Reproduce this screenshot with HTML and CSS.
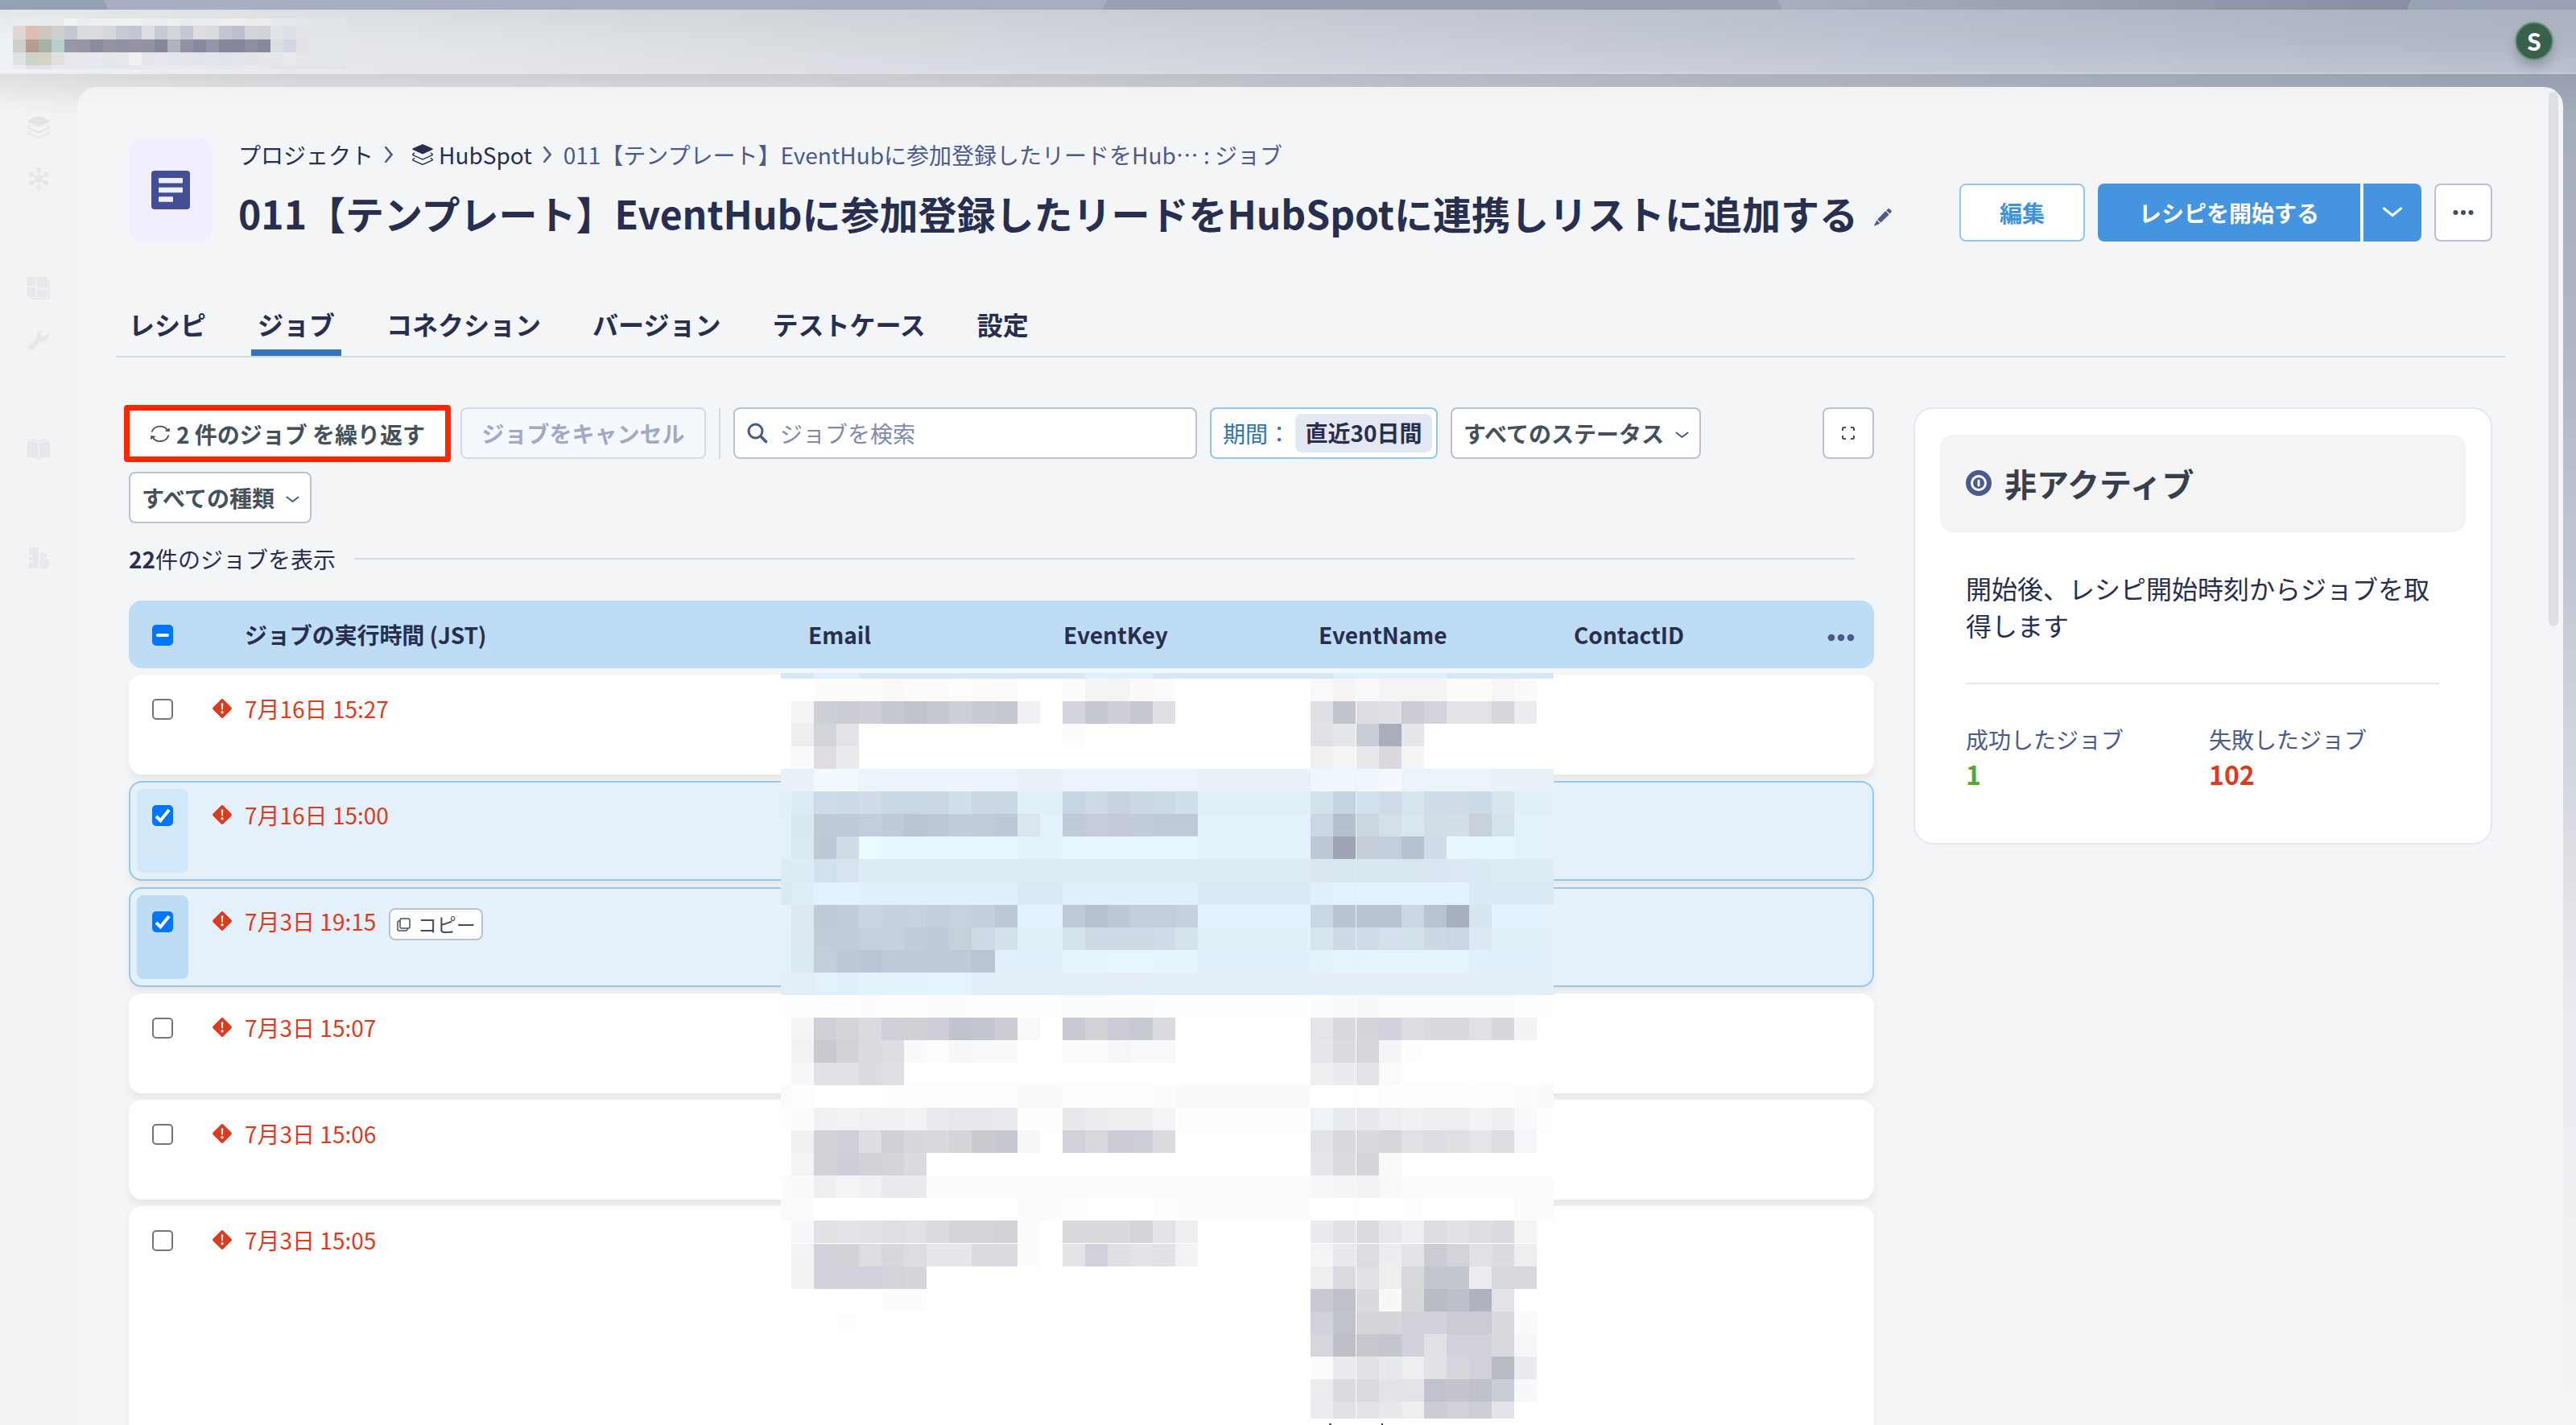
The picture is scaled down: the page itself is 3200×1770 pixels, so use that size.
FILE: index.html
```html
<!DOCTYPE html>
<html lang="ja">
<head>
    <meta charset="utf-8" />
    <meta name="viewport" content="width=device-width, initial-scale=1" />
    <title>011【テンプレート】EventHubに参加登録したリードをHubSpotに連携しリストに追加する : ジョブ</title>
    <link rel="stylesheet" href="styles.css">
</head>
<body>
    <!-- Shared icons -->
    <svg class="sprite" aria-hidden="true">
        <symbol id="icon-layers" viewBox="0 0 28 28">
            <path d="M14 0 27 5.6Q28.6 6.5 27 7.6L14 13.5 1 7.6Q-.6 6.5 1 5.600Z" fill="currentColor"/>
            <path d="M3.400 11.800 1.200 13.200Q.2 14 1.200 14.800L14 20.500 26.800 14.800Q27.800 14 26.800 13.200L24.600 11.800M3.400 18.800 1.200 20.200Q.2 21 1.200 21.800L14 27.400 26.800 21.800Q27.800 21 26.800 20.200L24.600 18.800" fill="none" stroke="currentColor" stroke-width="1.500"/>
        </symbol>
        <symbol id="icon-right" viewBox="0 0 10 20">
            <path d="M1.200 1 8.500 10 1.200 19" fill="none" stroke="currentColor" stroke-width="2.600" stroke-linecap="round"/>
        </symbol>
        <symbol id="icon-down" viewBox="0 0 16 9">
            <path d="M1 1.500 8 7 15 1.500" fill="none" stroke="currentColor" stroke-width="2" stroke-linecap="round"/>
        </symbol>
        <symbol id="icon-failed" viewBox="0 0 24 24">
            <path d="M10.300.9Q12-.8 13.700.9L23.200 10.400Q24.700 12 23.200 13.600L13.700 23.100Q12 24.800 10.300 23.100L.8 13.600Q-.7 12 .8 10.400Z" fill="currentColor"/>
            <path d="M10.700 5.500h2.600l-.5 8h-1.600z" fill="#fff"/>
            <circle cx="12" cy="16.700" r="1.700" fill="#fff"/>
        </symbol>
        <symbol id="icon-check" viewBox="0 0 26 26">
            <path d="M5 14 10.300 19.300 21 6" fill="none" stroke="#fff" stroke-width="4"/>
        </symbol>
    </svg>

    <svg class="browser-tabs" viewBox="0 0 3200 12">
        <defs>
            <linearGradient id="tab-fade" x1="0" x2="1">
                <stop offset="0" stop-color="#a5afbf"/>
                <stop offset="1" stop-color="#8690a2"/>
            </linearGradient>
        </defs>
        <rect width="3200" height="12" fill="#a5afbf"/>
        <path d="M0 0H129L134 12H0Z" fill="#95a0b1"/>
        <path d="M1375 0H2208L2214 12H1369Z" fill="#97a1b3"/>
        <path d="M2208 0H2995L2990 12H2214Z" fill="url(#tab-fade)"/>
        <path d="M2995 0H3200V12H2990Z" fill="#98a2b4"/>
    </svg>

    <header class="topbar">
        <svg class="topbar-mosaic" id="brand-mosaic" width="430" height="70"></svg>
        <div class="avatar">S</div>
    </header>

    <div class="layout">
        <nav class="sidebar">
            <svg class="nav-icon nav-layers"><use href="#icon-layers"/></svg>
            <svg class="nav-icon nav-hub" viewBox="0 0 28 28">
                <g fill="currentColor" stroke="currentColor" stroke-width="2">
                    <circle cx="14" cy="14" r="4"/>
                    <path d="M14 3V25M4.500 8.500 23.500 19.500M4.500 19.500 23.500 8.500"/>
                    <circle cx="14" cy="3" r="2"/><circle cx="14" cy="25" r="2"/>
                    <circle cx="4.800" cy="8.800" r="2.300"/><circle cx="23.200" cy="19.200" r="2.300"/>
                    <circle cx="4.800" cy="19.200" r="2.300"/><circle cx="23.200" cy="8.800" r="2.300"/>
                </g>
            </svg>
            <hr>
            <svg class="nav-icon nav-board" viewBox="0 0 28 28">
                <g fill="currentColor">
                    <path d="M2 0h8.500v11H0V2Q0 0 2 0ZM12 0h11q2 0 2 2v12H12ZM0 12.500h10.500V25H2q-2 0-2-2ZM12 15.500h13V23q0 2-2 2H12Z"/>
                    <path d="M26 4h2v22q0 2-2 2H6q-1.500 0-2-2h22Z"/>
                </g>
            </svg>
            <svg class="nav-icon nav-wrench" viewBox="0 0 28 28">
                <path d="M20.500 2A8 8 0 0 0 12.200 12L2.500 20.500A3.400 3.400 0 1 0 7.500 25.500L16 16A8 8 0 0 0 26 5.500L21 10 17.500 9 16.700 6Z" fill="currentColor"/>
            </svg>
            <hr>
            <svg class="nav-icon nav-book" viewBox="0 0 28 28">
                <g fill="currentColor">
                    <path d="M0 5Q8 3 13.400 7.500V27Q8 22.500 0 24ZM28 5Q20 3 14.600 7.500V27Q20 22.500 28 24Z"/>
                    <path d="M1.500 2Q9 0 14 4.700 19 0 26.500 2V3.500Q19 2 14 6.500 9 2 1.500 3.500Z"/>
                </g>
            </svg>
            <hr>
            <svg class="nav-icon nav-building" viewBox="0 0 28 28">
                <path d="M2 2Q2 0 4 0H12Q14 0 14 2V26H0V25H2V19H7V16H2V12H7V9H2ZM16 6 24 8V12L16 14ZM21 13 27 15.500V20Q27 25.500 21 28 15 25.500 15 20V15.500Z" fill="currentColor"/>
            </svg>
        </nav>

        <main class="panel">
            <div class="page-head">
                <div class="recipe-icon">
                    <svg width="48" height="48" viewBox="0 0 48 48">
                        <rect width="48" height="48" rx="4" fill="#444e95"/>
                        <g fill="#f0eefe">
                            <rect x="9" y="9" width="30" height="6.500" rx="1"/>
                            <rect x="9" y="20.700" width="30" height="6.500" rx="1"/>
                            <rect x="9" y="32.300" width="18" height="6.500" rx="1"/>
                        </g>
                    </svg>
                </div>
                <div class="heading">
                    <div class="breadcrumbs">
                        <span>プロジェクト</span>
                        <svg class="crumb-arrow"><use href="#icon-right"/></svg>
                        <svg class="crumb-layers"><use href="#icon-layers"/></svg>
                        <span>HubSpot</span>
                        <svg class="crumb-arrow"><use href="#icon-right"/></svg>
                        <span class="crumb-current">011【テンプレート】EventHubに参加登録したリードをHub… : ジョブ</span>
                    </div>
                    <div class="title-row">
                        <h1>011【テンプレート】EventHubに参加登録したリードをHubSpotに連携しリストに追加する</h1>
                        <svg class="pencil" viewBox="0 0 22 22">
                            <path d="M15.300 2.200 17.200.5Q18.400-.4 19.600.7L21.200 2.300Q22.300 3.500 21.300 4.600L19.600 6.500ZM14.400 3.100 18.700 7.400 8.500 17.600 4.200 13.400ZM3.300 14.500 7.500 18.600 1 21.600Q0 21.800.3 20.800Z" fill="#4a5a8c"/>
                        </svg>
                    </div>
                </div>
                <div class="actions">
                    <button class="button edit">編集</button>
                    <div class="split">
                        <button class="start">レシピを開始する</button>
                        <button class="start-more"><svg width="24" height="14" viewBox="0 0 24 14"><path d="M1.500 2 12 10.500 22.500 2" fill="none" stroke="#fff" stroke-width="3" stroke-linecap="round"/></svg></button>
                    </div>
                    <button class="button more"><svg width="26" height="8" viewBox="0 0 26 8"><g fill="#44505c"><circle cx="3.500" cy="4" r="3"/><circle cx="13" cy="4" r="3"/><circle cx="22.500" cy="4" r="3"/></g></svg></button>
                </div>
            </div>

            <div class="tabs">
                <span>レシピ</span>
                <span class="active">ジョブ</span>
                <span>コネクション</span>
                <span>バージョン</span>
                <span>テストケース</span>
                <span>設定</span>
            </div>

            <div class="content">
                <section class="jobs">
                    <div class="toolbar">
                        <button class="repeat">
                            <svg width="24" height="24" viewBox="0 0 24 24">
                                <path d="M1.500 9.500A11 10.500 0 0 1 21.500 8M22.500 13.500A11 10.500 0 0 1 2.500 16" fill="none" stroke="#44505c" stroke-width="1.800"/>
                                <path d="M23.800 4.500V9.200L17.500 8.500ZM.2 19V14L7 15Z" fill="#44505c"/>
                            </svg>
                            <span>2 件のジョブ を繰り返す</span>
                        </button>
                        <button class="cancel">ジョブをキャンセル</button>
                        <div class="separator"></div>
                        <div class="search">
                            <svg width="26" height="26" viewBox="0 0 26 26"><circle cx="10.500" cy="10.500" r="8.500" fill="none" stroke="#4a5a8c" stroke-width="3"/><path d="M17 17 23.500 23.500" stroke="#4a5a8c" stroke-width="3.600" stroke-linecap="round"/></svg>
                            <span>ジョブを検索</span>
                        </div>
                        <div class="period">期間：<b>直近30日間</b></div>
                        <button class="filter status">すべてのステータス<svg class="down"><use href="#icon-down"/></svg></button>
                        <button class="expand"><svg width="16" height="16" viewBox="0 0 16 16"><path d="M1 5V2.500Q1 1 2.500 1H5M11 1h2.500Q15 1 15 2.500V5M15 11v2.500q0 1.500-1.500 1.500H11M5 15H2.500Q1 15 1 13.500V11" fill="none" stroke="#44505c" stroke-width="2"/></svg></button>
                    </div>
                    <button class="filter kinds">すべての種類<svg class="down"><use href="#icon-down"/></svg></button>
                    <div class="count"><span><b>22</b>件のジョブを表示</span></div>

                    <div class="table">
                        <div class="table-head">
                            <div class="select"><i class="checkbox checked"><i class="dash"></i></i></div>
                            <div class="time">ジョブの実行時間 (JST)</div>
                            <div>Email</div>
                            <div>EventKey</div>
                            <div>EventName</div>
                            <div>ContactID</div>
                            <svg class="columns" viewBox="0 0 34 12"><g fill="#4a5a8c"><circle cx="5" cy="6" r="4.300"/><circle cx="17" cy="6" r="4.300"/><circle cx="29" cy="6" r="4.300"/></g></svg>
                        </div>
                        <div class="row">
                            <div class="select"><i class="checkbox"></i></div>
                            <div class="job"><svg class="failed"><use href="#icon-failed"/></svg>7月16日 15:27</div>
                        </div>
                        <div class="row selected">
                            <div class="select"><i class="checkbox checked"><svg><use href="#icon-check"/></svg></i></div>
                            <div class="job"><svg class="failed"><use href="#icon-failed"/></svg>7月16日 15:00</div>
                        </div>
                        <div class="row selected hovered">
                            <div class="select"><i class="checkbox checked"><svg><use href="#icon-check"/></svg></i></div>
                            <div class="job"><svg class="failed"><use href="#icon-failed"/></svg>7月3日 19:15
                                <button class="copy"><svg width="17" height="17" viewBox="0 0 17 17"><g fill="none" stroke="#44505c" stroke-width="1.500"><rect x="4" y="1" width="12" height="12" rx="1.500"/><path d="M4 4H2.500Q1 4 1 5.500V14.500Q1 16 2.500 16H11.500Q13 16 13 14.500V13"/></g></svg>コピー</button>
                            </div>
                        </div>
                        <div class="row">
                            <div class="select"><i class="checkbox"></i></div>
                            <div class="job"><svg class="failed"><use href="#icon-failed"/></svg>7月3日 15:07</div>
                        </div>
                        <div class="row">
                            <div class="select"><i class="checkbox"></i></div>
                            <div class="job"><svg class="failed"><use href="#icon-failed"/></svg>7月3日 15:06</div>
                        </div>
                        <div class="row tall">
                            <div class="select"><i class="checkbox"></i></div>
                            <div class="job"><svg class="failed"><use href="#icon-failed"/></svg>7月3日 15:05</div>
                        </div>
                        <svg class="table-mosaic" id="table-mosaic" width="960" height="934"></svg>
                    </div>
                </section>

                <aside class="summary">
                    <div class="state">
                        <svg width="32" height="32" viewBox="0 0 32 32"><circle cx="16" cy="16" r="16" fill="#4a5a8c"/><circle cx="16" cy="16" r="8.500" fill="none" stroke="#fff" stroke-width="3"/><rect x="14.500" y="11.500" width="3" height="9" rx="1.500" fill="#fff"/></svg>
                        <span>非アクティブ</span>
                    </div>
                    <p>開始後、レシピ開始時刻からジョブを取得します</p>
                    <div class="stats">
                        <div>成功したジョブ<b class="ok">1</b></div>
                        <div>失敗したジョブ<b class="ng">102</b></div>
                    </div>
                </aside>
            </div>
            <div class="scrollbar"></div>
        </main>
    </div>
    <script src="mosaic.js"></script>
</body>
</html>
```

FILE: styles.css
```css
* {
    margin: 0;
    padding: 0;
    box-sizing: border-box;
}

body {
    width: 3200px;
    height: 1770px;
    overflow: hidden;
    font-family: "Noto Sans CJK JP", "Noto Sans", sans-serif;
    font-size: 28px;
    line-height: 40px;
    color: #272e4f;
    background: #f3f3f3;
}

button {
    font: inherit;
    background: #fff;
    border: 2px solid #bbc1d0;
    border-radius: 8px;
    color: #44505c;
    display: flex;
    align-items: center;
    justify-content: center;
}

svg {
    display: block;
    flex-shrink: 0;
}

.sprite {
    position: absolute;
    width: 0;
    height: 0;
}

.browser-tabs {
    width: 3200px;
    height: 12px;
}

/* Top bar */
.topbar {
    position: relative;
    height: 80px;
    padding-right: 28px;
    display: flex;
    align-items: center;
    justify-content: flex-end;
    background:
        linear-gradient(180deg, rgba(130, 145, 155, 0.1), rgba(255, 255, 255, 0) 50%, rgba(245, 242, 255, 0.18)),
        linear-gradient(90deg, #eef2f3 0%, #e3e6e9 14%, #d4d8dd 37%, #c8ccd7 57%, #b8bfcc 80%, #aeb6c3 100%);
    border-bottom: 2px solid rgba(255, 255, 255, 0.3);
}

.topbar-mosaic {
    position: absolute;
    left: 0;
    top: 11px;
}

.avatar {
    width: 48px;
    height: 48px;
    border-radius: 50%;
    border: 2px solid #6d9380;
    background: #38614b;
    color: #fff;
    font-family: Lato, sans-serif;
    font-weight: 900;
    font-size: 31px;
    line-height: 44px;
    text-align: center;
    box-shadow: 0 8px 12px rgba(70, 80, 100, 0.3);
}

.layout {
    height: 1678px;
    display: flex;
    padding: 16px 16px 0 0;
    background:
        linear-gradient(180deg, rgba(90, 95, 105, 0.14), rgba(90, 95, 105, 0) 50px) 0 0 / 100% 50px no-repeat,
        linear-gradient(180deg, #a1aabb 0, #b3bbc9 420px, #ced1d9 780px, #e9ebee 1150px, #f3f4f5 1678px) right / 40px 100% no-repeat,
        linear-gradient(90deg, #f4f4f4 0, #e6e7e8 300px, #dadcdf 1100px, #c7cad2 1700px, #b4bbc7 2400px, #a1aabb 3160px) 0 0 / 100% 50px no-repeat,
        #f3f3f3;
}

/* Sidebar */
.sidebar {
    width: 96px;
    height: 1662px;
    padding-top: 36px;
    display: flex;
    flex-direction: column;
    align-items: center;
    color: #e6e8ec;
    background: linear-gradient(180deg, rgba(243, 243, 243, 0) 0, #f3f3f3 100px);
}

.sidebar hr {
    width: 56px;
    border: 0;
    border-top: 1px solid #eff0f0;
}

.nav-icon {
    width: 28px;
    height: 28px;
}

.nav-layers {
    color: #e2e3e4;
}

.nav-hub {
    margin: 36px 0 61px;
}

.nav-board {
    margin-top: 46px;
}

.nav-wrench {
    margin: 36px 0 61px;
}

.nav-book {
    margin: 46px 0 61px;
}

.nav-building {
    margin-top: 46px;
}

/* Main panel */
.panel {
    position: relative;
    width: 3088px;
    height: 1662px;
    padding: 64px 72px 0 48px;
    border-radius: 24px 24px 0 0;
    background: linear-gradient(180deg, #f0f1f3 0, #f4f5f7 24px);
}

.scrollbar {
    position: absolute;
    top: 6px;
    right: 6px;
    width: 12px;
    height: 664px;
    border-radius: 6px;
    background: #dddfe4;
}

.page-head {
    display: flex;
    height: 128px;
    padding-left: 16px;
    margin-right: 16px;
}

.recipe-icon {
    width: 104px;
    height: 128px;
    border-radius: 16px;
    background: #f0eefe;
    display: flex;
    align-items: center;
    justify-content: center;
}

.heading {
    margin-left: 32px;
    flex: 1;
    white-space: nowrap;
}

.breadcrumbs {
    display: flex;
    align-items: center;
    height: 40px;
}

.crumb-arrow {
    width: 10px;
    height: 20px;
    margin: 0 15px 0 14px;
    color: #4a5a8c;
}

.crumb-layers {
    width: 26px;
    height: 26px;
    margin: 0 7px 0 9px;
}

.crumb-current {
    color: #4a5a8c;
}

.title-row {
    display: flex;
    align-items: center;
    height: 72px;
    margin-top: 16px;
}

h1 {
    font-size: 48px;
    line-height: 72px;
    font-weight: 700;
}

.pencil {
    width: 22px;
    height: 22px;
    margin: 12px 0 0 20px;
}

.actions {
    display: flex;
    gap: 16px;
    height: 72px;
    margin-top: 56px;
    font-weight: 700;
}

.edit {
    width: 156px;
    border-color: #92c7eb;
    color: #3e92dc;
}

.split {
    display: flex;
    gap: 4px;
}

.start,
.start-more {
    border: 0;
    background: #4494df;
    color: #fff;
}

.start {
    width: 326px;
    border-radius: 8px 0 0 8px;
}

.start-more {
    width: 72px;
    border-radius: 0 8px 8px 0;
}

.more {
    width: 72px;
}

.tabs {
    display: flex;
    gap: 48px;
    height: 144px;
    padding: 78px 0 0 8px;
    border-bottom: 2px solid #d1d9e6;
    font-size: 32px;
    line-height: 48px;
    font-weight: 700;
}

.tabs span {
    height: 64px;
    padding: 0 8px;
}

.tabs .active {
    background: linear-gradient(#3673bd, #3673bd) bottom / 100% 8px no-repeat;
}

.content {
    display: flex;
    justify-content: space-between;
    padding: 62px 16px 0;
}

/* Toolbar */
.jobs {
    width: 2168px;
}

.toolbar {
    display: flex;
    height: 64px;
    white-space: nowrap;
}

/* The highlight frame spills over the button's own box */
.repeat {
    width: 406px;
    height: 71px;
    margin: -3px 12px 0 -6px;
    padding-left: 1px;
    border: 7px solid #ff2600;
    border-radius: 4px;
    gap: 8px;
    font-weight: 700;
}

.cancel {
    width: 305px;
    margin-right: 1px;
    border-color: #d2dae6;
    background: #f5f9fd;
    color: #a1a9c6;
    font-weight: 700;
}

.separator {
    width: 2px;
    margin: 0 16px 0 15px;
    background: #d2dae6;
}

.search {
    width: 576px;
    margin-right: 16px;
    padding: 0 15px;
    display: flex;
    align-items: center;
    gap: 15px;
    border: 2px solid #bbc1d0;
    border-radius: 8px;
    background: #fff;
    color: #8089ae;
}

.period {
    width: 283px;
    margin-right: 16px;
    padding-left: 14px;
    display: flex;
    align-items: center;
    border: 2px solid #92c7eb;
    border-radius: 8px;
    background: #fff;
    color: #2f72bb;
}

.period b {
    height: 48px;
    width: 170px;
    margin-left: 6px;
    border-radius: 8px;
    background: #e4e8f2;
    color: #272e4f;
    line-height: 47px;
    text-align: center;
}

.filter {
    font-weight: 700;
    justify-content: space-between;
    padding: 0 13px 0 14px;
}

.status {
    width: 311px;
}

.kinds {
    width: 227px;
    height: 64px;
    margin-top: 16px;
}

.down {
    width: 17px;
    height: 9px;
    margin-top: 4px;
    color: #4a5a8c;
}

.expand {
    width: 64px;
    margin-left: auto;
}

.count {
    display: flex;
    align-items: center;
    height: 40px;
    margin: 24px 24px 0 0;
}

.count::after {
    content: "";
    flex: 1;
    height: 2px;
    margin-left: 23px;
    background: #d1d9e6;
}

/* Jobs table */
.table {
    position: relative;
    margin-top: 32px;
}

.table-head {
    position: relative;
    display: grid;
    grid-template-columns: 64px 770px 317px 317px 317px 1fr;
    height: 84px;
    padding: 0 10px;
    margin-bottom: 8px;
    border-radius: 16px;
    background: #bedcf4;
    font-weight: 700;
    line-height: 84px;
}

.table-head .time {
    padding-left: 70px;
    letter-spacing: -0.1px;
}

.columns {
    position: absolute;
    right: 24px;
    top: 40px;
    width: 34px;
    height: 12px;
}

.select {
    display: flex;
    justify-content: center;
    padding-top: 20px;
    border-radius: 8px;
}

.table-head .select {
    padding-top: 30px;
}

.row {
    display: flex;
    height: 124px;
    padding: 8px;
    margin-bottom: 8px;
    border: 2px solid #fff;
    border-radius: 16px;
    background: #fff;
    box-shadow: 0 6px 10px rgba(60, 60, 60, 0.08);
}

.row .select {
    width: 64px;
}

.selected {
    border-color: #94c8ee;
    background: #e4f1fb;
}

.selected .select {
    background: #d2e8f9;
}

.hovered .select {
    background: #bedcf4;
}

.tall {
    height: 300px;
}

.job {
    display: flex;
    height: 40px;
    margin-top: 12px;
    padding-left: 30px;
    color: #de3a1b;
    white-space: nowrap;
}

.failed {
    width: 24px;
    height: 24px;
    margin: 8px 16px 0 0;
}

.checkbox {
    width: 26px;
    height: 26px;
    border: 2px solid #767676;
    border-radius: 5px;
    background: #fff;
}

.checked {
    display: flex;
    align-items: center;
    justify-content: center;
    border: 0;
    background: #0075ff;
}

.checked svg {
    width: 26px;
    height: 26px;
}

.dash {
    width: 16px;
    height: 4px;
    border-radius: 2px;
    background: #fff;
}

.copy {
    width: 117px;
    height: 40px;
    margin: 4px 0 0 16px;
    gap: 9px;
    font-size: 24px;
    line-height: 34px;
}

.table-mosaic {
    position: absolute;
    left: 810px;
    top: 90px;
}

/* Recipe summary */
.summary {
    width: 719px;
    height: 543px;
    padding: 32px 31px;
    border: 2px solid #e4e9f1;
    border-radius: 24px;
    background: #fff;
}

.state {
    display: flex;
    align-items: center;
    gap: 16px;
    height: 121px;
    padding: 0 0 2px 32px;
    border-radius: 16px;
    background: #f4f4f4;
    color: #36404c;
    font-size: 40px;
    font-weight: 700;
}

.summary p {
    margin: 46px 32px 0;
    padding-bottom: 49px;
    width: 588px;
    border-bottom: 2px solid #e4e9f1;
    font-size: 32px;
    line-height: 46px;
}

.stats {
    display: grid;
    grid-template-columns: 302px 1fr;
    margin: 48px 32px 0;
    color: #4a5a8c;
}

.stats b {
    display: block;
    font-size: 32px;
    line-height: 46px;
}

.ok {
    color: #5aa52a;
}

.ng {
    color: #de3a1b;
}
```

FILE: mosaic.js
```js
// Pixelated cover over private data. Each row: [base colour, [first column, colour, colour...], ...]
const SVG_NS = 'http://www.w3.org/2000/svg';

function addRect(svg, x, y, w, h, fill) {
    const rect = document.createElementNS(SVG_NS, 'rect');
    const left = Math.round(x);
    const top = Math.round(y);
    rect.setAttribute('x', left);
    rect.setAttribute('y', top);
    rect.setAttribute('width', Math.round(x + w) - left);
    rect.setAttribute('height', Math.round(y + h) - top);
    rect.setAttribute('fill', '#' + fill);
    svg.appendChild(rect);
}

const tableRows = [
    ['ffffff', [1, 'fdfcfa', 'fdfcfa', 'fdfcfa', 'faf9f7', 'fcfafb', 'fcfafb', 'fefdfb', 'fcfbf9', 'fcfafb'], [12, 'fdfcfc', 'f5f5f5', 'f5f4f4', 'fcf9fa', 'fcfafb'], [23, 'fbf8f9', 'f6f4f4', 'fbf8fa', 'f5f3f4', 'f5f3f4', 'f5f3f4', 'fcfbf9', 'fcfbf9', 'f7f5f6', 'fafafa']],
    ['ffffff', [0, 'f3f4f6', 'cdcfd7', 'cbcdd6', 'ceced8', 'c7c9d2', 'c1c3cd', 'c5c7d1', 'ccced8', 'c9cbd4', 'c7c9d1', 'f0f0f5'], [12, 'd3d5de', 'c7c9d2', 'cfcdd8', 'c6c8d1', 'dfdfe5'], [23, 'dfe0e5', 'c2c5cd', 'dddde3', 'dfe0e5', 'cacbd5', 'd4d3dd', 'e2e3e7', 'e2e3e7', 'd6d7dc', 'ecedf1']],
    ['ffffff', [0, 'eeeef1', 'd3d4d9', 'e4e4e8'], [12, 'fcfcfc'], [23, 'e0e0e5', 'e5e7eb', 'cacdd6', 'acadba', 'e5e6ea']],
    ['ffffff', [0, 'f9f9f9', 'dfdde3', 'ebebed'], [23, 'f0f0f1', 'f4f4f4', 'e9e9eb', 'dad9df', 'f4f4f4']],
    ['e8f0f8', [1, 'f1f9ff', 'f1f9ff', 'ebf4fb', 'ecf5fd', 'ecf5fd', 'ecf5fd', 'ecf5fd', 'ecf5fd', 'ecf5fd'], [12, 'ebf4fc', 'ebf4fc', 'ebf4fc', 'ebf4fc', 'ebf4fc', 'ebf4fc'], [23, 'eef6fe', 'eef6fe', 'eef6fe', 'f3f9ff', 'ebf4fb', 'ebf4fb', 'ebf4fb', 'ebf4fb']],
    ['e0eff8', [0, 'ddebf4', 'cfdce7', 'ccd9e6', 'd1dce8', 'c9d7e4', 'c9d7e4', 'ccd9e5', 'd1dfea', 'cbd8e4', 'cad8e4'], [12, 'c7d6e4', 'cedae6', 'c8d3e0', 'ccd9e5', 'cbdae4', 'd1dfea'], [23, 'd3e1eb', 'c5d3e1', 'd3e1ec', 'cfdbe7', 'd6e4eb', 'd0dce8', 'd0dde6', 'cbdae5', 'd7e4ec']],
    ['e3f1fb', [0, 'd9e7ee', 'bfcad6', 'c0cbd8', 'c4cddb', 'c0cbd8', 'b9c4d4', 'bcc8d7', 'c2cddb', 'c1ccdb', 'bec9d5', 'd9e6ef'], [12, 'c0cbd7', 'c4cdd9', 'c4cbd8', 'c2cddb', 'bfcad7', 'bfcad6'], [23, 'cad6e2', 'b4c0cc', 'cad7df', 'd3e0e8', 'd8e6ed', 'd1dee6', 'd2dfe7', 'c8d1dc', 'd4e2e9']],
    ['e3f1fb', [0, 'dae8ef', 'bdcad5', 'd0dde5', 'ebfaff', 'e8f6ff', 'e8f6ff', 'e8f6ff', 'e8f6ff', 'e8f6ff', 'e8f6ff'], [12, 'e8f6ff', 'e8f6ff', 'e8f6ff', 'e8f6ff', 'e8f6ff', 'e8f6ff'], [23, 'bec9d5', '9ea3b6', 'c5cdd9', 'c2cedb', 'b6c2d2', 'd0dce7', 'e7f6ff', 'e7f6ff', 'e7f6ff']],
    ['ddebf5', [1, 'd2e0eb', 'd7e3ef'], [23, 'dae6f0', 'd8e6ed', 'd8e6ee', 'd8e6f0', 'd8e6ee', 'dbe6f2', 'dbe8f3', 'dbe9f3']],
    ['dceaf6', [0, 'dfedf6', 'e3f2fd', 'e3f2fd', 'e1f0fa', 'e1f0fa', 'e1f0fa', 'e1f0fa', 'e1f0fa', 'e1f0fa', 'e1f0fa'], [12, 'e1effa', 'e1effa', 'e1effa', 'e1effa', 'e1effa', 'e1effa'], [23, 'e0eff9', 'e2f1fb', 'e2f1fb', 'e2f1fb', 'e2f1fb', 'e2f1fb', 'e2f1fb']],
    ['e3f2fc', [0, 'dde9f1', 'bfcad6', 'c3ccd9', 'cbd5e1', 'c6d1de', 'c8d2de', 'c4ceda', 'c8d2de', 'c4cfdb', 'bdc9d6'], [12, 'bfcad6', 'b5c0d0', 'bdc9d6', 'c3ceda', 'c3cedb', 'c6cfdc'], [23, 'cad7e4', 'b8c4d3', 'b8c4d3', 'b8c4d3', 'cad6e2', 'b7c3d0', 'a6aec0', 'd7e5ee']],
    ['e1f0f9', [0, 'dde9f1', 'c2cdd9', 'c3cdd9', 'c5d0dc', 'c6d1dd', 'c2cdd9', 'c1cbd7', 'c5d0db', 'cdd9e4', 'd3e1e9'], [12, 'd5e3eb', 'cddae6', 'cddae6', 'cddae6', 'd0dce9', 'd4e2e9'], [23, 'd6e4ec', 'cddae6', 'd0dbe7', 'd4e0ec', 'd2e0e8', 'ccd8e4', 'cad6e3', 'ddeaf3']],
    ['e1f0fa', [0, 'dae8ef', 'c3cedb', 'bdc9d7', 'bac6d5', 'bfcad9', 'bfcad9', 'bfcad9', 'bfcad9', 'bac5d3'], [12, 'e5f4fd', 'e5f4fd', 'e5f6fe', 'e5f6fe', 'e5f4fd', 'e5f4fd'], [23, 'e3f3fc', 'e4f4fd', 'e4f4fd', 'e4f4fd', 'e4f4fd', 'e5f5fd', 'e5f5fd']],
    ['e3eef8', [1, 'e3f1fa', 'e2f0fa', 'e4f2fb', 'e4f2fb', 'e4f2fb', 'e5f3fc', 'e5f3fc']],
    ['fefefe', [3, 'fcfcfc'], [6, 'fcfcfc', 'fcfcfc'], [12, 'fbfbfb', 'fbfbfb', 'fcfcfc', 'fcfcfc'], [23, 'fcfcfc', 'fafafa', 'f8f8f8', 'fbfbfb', 'fbfbfb', 'fbfbfb', 'fbfbfb', 'fbfbfb', 'fbfbfb', 'fdfdfd']],
    ['ffffff', [0, 'f3f4f6', 'cfcfd8', 'd4d5da', 'dadbe0', 'cfcfd8', 'd0d0d6', 'cecdd8', 'c0c2cd', 'c4c7d0', 'cdccd5', 'f9f9f9'], [12, 'c8cbd3', 'd2d3d8', 'cbcbd5', 'c8cad3', 'dadbe0'], [23, 'e4e5e9', 'd8d9dd', 'd5d6db', 'd2d2dc', 'dddde2', 'd9dade', 'd9dade', 'e0e1e5', 'd6d8dc', 'f2f3f5']],
    ['ffffff', [0, 'f2f2f5', 'c9c9d2', 'd2d3d8', 'dbdae0', 'dedde3', 'fafafa', 'fdfdfd', 'f8f8f8', 'f9f9f9', 'fafafa'], [12, 'fcfcfc', 'fcfcfc', 'f6f6f6', 'f9f9f9', 'f9f9f9'], [23, 'e6e6eb', 'dbdce1', 'd6d7dc', 'f4f5f7', 'fefefe']],
    ['ffffff', [0, 'f8f8f8', 'e2e1e6', 'e2e1e6', 'dbdce1', 'e0dfe6'], [23, 'efeff1', 'e9ebee', 'e4e3e8', 'fbfbfb']],
    ['f9fbfa', [0, 'fcfefd', 'ffffff', 'ffffff', 'ffffff', 'fefefe', 'fdfdfd', 'fdfdfd', 'fefefc', 'fefefe', 'fdfdfd'], [12, 'fefefe', 'fefefe', 'fdfdfd', 'fdfdfd', 'fcfcfc'], [23, 'ffffff', 'ffffff', 'ffffff', 'fdfdfd', 'fdfdfd', 'fcfefd', 'fdfefd', 'fdfdfd', 'fdfdfd', 'fbfcfb']],
    ['fefefe', [0, 'fcfcfc', 'f0f1f3', 'f1f2f3', 'f0f0f2', 'eff1f3', 'f1f3f4', 'e9ebee', 'e6e8ec', 'e8e9ed', 'e9eaed'], [12, 'e8e9ec', 'ededf0', 'efeff0', 'efeff0', 'f4f5f7'], [23, 'f0f3f5', 'e9eaed', 'e7e8ec', 'edeeef', 'f0f1f3', 'eeeef0', 'eeeef0', 'f2f3f5', 'eeeef0', 'f8f9fb']],
    ['ffffff', [0, 'f1f1f4', 'd2d3d7', 'cfcfd8', 'dddde2', 'd0d0d9', 'd7d7dc', 'd9d9de', 'd5d6da', 'cacad0', 'c7c9d1', 'f8f8f8'], [12, 'd1d1da', 'd8d9de', 'cdccd6', 'cbced6', 'dbdbe0'], [23, 'e4e3e9', 'dadade', 'dadade', 'd6d7db', 'e0e0e5', 'dfdde3', 'dfdfe4', 'e4e5e9', 'dddde2', 'f4f6f9']],
    ['ffffff', [0, 'f4f4f4', 'd2d3d7', 'cecdd8', 'd2d3d7', 'd4d5d9', 'dadae0'], [23, 'e6e7eb', 'dbdce1', 'd5d6da', 'f9f9f9']],
    ['fcfcfc', [0, 'fafafa', 'efeff1', 'f2f4f6', 'f0f1f3', 'e9eaee', 'ebebed'], [23, 'f7f8f9', 'f5f5f5', 'f2f3f5', 'f9f9f9']],
    ['fafcfb', [0, 'fcfcfc', 'ffffff', 'ffffff', 'ffffff', 'ffffff', 'ffffff', 'ffffff', 'ffffff', 'ffffff', 'ffffff'], [12, 'fefefe', 'ffffff', 'ffffff', 'ffffff', 'fdfdfd', 'fcfcfc'], [23, 'ffffff', 'ffffff', 'ffffff', 'ffffff', 'fefefe', 'ffffff', 'ffffff', 'ffffff', 'ffffff']],
    ['ffffff', [0, 'f6f8fb', 'e0e1e5', 'e3e4e8', 'e1e2e6', 'dddfe3', 'e0e1e5', 'dadbe0', 'd3d4d9', 'd4d5d9', 'd2d3d8', 'fafcfb'], [12, 'd8d9dd', 'd8d9dd', 'd9dade', 'd3d4d9', 'e2e3e7', 'efeff1'], [23, 'eaeaef', 'e2e1e6', 'dbdce1', 'e7e8eb', 'eeeef0', 'dddde2', 'e2e1e7', 'dddde2', 'dcdbe1', 'f4f4f5']],
    ['ffffff', [0, 'f3f3f6', 'd2d2dc', 'd2d3d7', 'dddde2', 'd7d7dc', 'dcdde2', 'e6e7eb', 'e6e7eb', 'dbdce1', 'dbdce1', 'fbfbfb'], [12, 'e3e4e8', 'd1d1dc', 'dfdfe4', 'e3e3e8', 'e2e1e6', 'f3f3f6'], [23, 'f2f4f6', 'e8e9ec', 'dcdce1', 'ededef', 'e3e4e8', 'cbcbd3', 'd3d4d9', 'e0e1e5', 'dbdbe0', 'eeeef0']],
    ['ffffff', [0, 'f3f3f6', 'd2d2dc', 'd3d2dc', 'd1d1dc', 'd3d4d9', 'd5d6db'], [23, 'eeeeee', 'dadbe0', 'e0e1e6', 'eeeeef', 'd8d9dd', 'c4c7d0', 'c4c7d0', 'ebecef', 'd8d9dd', 'd8d9dd']],
    ['ffffff', [4, 'fcfcfc', 'fcfcfc'], [23, 'cac9d2', 'c0c0ca', 'd9dade', 'f8f8f8', 'd7d8dc', 'b9bcc5', 'bdc0ca', 'b1b2bf', 'e2e3e7']],
    ['ffffff', [2, 'fefefe'], [23, 'd1d1db', 'c0c2cc', 'd5d6da', 'd5d6da', 'd1d1db', 'd1d1db', 'cccbd5', 'cccbd5', 'd9dade', 'fafafa']],
    ['ffffff', [23, 'd6d7dc', 'bfbec9', 'c8c7d0', 'c4c7d0', 'd1d1dc', 'e2e1e6', 'd1d1db', 'd1d1db', 'd8d9dd', 'f6f6f9']],
    ['ffffff', [23, 'fbfbfb', 'e9eaed', 'e1e2e6', 'e8e9ec', 'eeeef0', 'e3e1e7', 'd6d7dc', 'd1d1dc', 'b8bac4', 'eaebee']],
    ['ffffff', [23, 'ededef', 'dadbe0', 'dadbe0', 'e3e4e8', 'e4e3e8', 'c0c2cd', 'c5c4ce', 'bec0ca', 'cacdd6', 'f6f8fa']],
    ['ffffff', [23, 'ebecf0', 'e0e1e5', 'e3e4e7', 'e9e9ec', 'eeeeef', 'cdccd6', 'd1d1dc', 'cecdd6', 'e4e3e9']]
];

const table = document.getElementById('table-mosaic');
const CELL = 28.06;

// thin strip touching the table header
addRect(table, 0, 0, 960, 7, 'd8e9f6');
addRect(table, 41, 0, 56, 7, 'dcf0fe');
addRect(table, 378, 0, 84, 7, 'dff1fd');
addRect(table, 687, 0, 140, 7, 'dcf1ff');

tableRows.forEach(([base, ...runs], i) => {
    const y = 7 + i * CELL;
    const h = i === tableRows.length - 1 ? 21 : CELL;
    addRect(table, 0, y, 960, h, base);
    runs.forEach(([start, ...colors]) => {
        colors.forEach((color, j) => addRect(table, 13 + (start + j) * CELL, y, CELL, h, color));
    });
});
// tips of the text line below the cover
addRect(table, 681, 932, 3, 2, '55596f');
addRect(table, 746, 932, 2, 2, '272e4f');

const brandRows = [
    [0, 9, ['e8eeef', 'e9eff0', 'e9ecec', 'ebebec', 'f2f4f3', 'ececee', 'eeefef', 'eeeeef', 'f0f1f1', 'f0f1f1', 'ecedee', 'ecebee', 'edeeef', 'ebebed', 'ecedee', 'ecedee', 'efefef', 'efefef', 'ececed', 'ececed', 'e7e8e9', 'e6e8ea', 'e4e6e8', 'e2e5e7', 'e2e5e7', 'e2e5e7']],
    [9, 17, ['e3d4d6', 'e1bcb1', 'cec7bc', 'cfcfd2', 'c4c8d1', 'dbdbe2', 'dadbe0', 'd5d8dd', 'c8cbd4', 'c3c6d1', 'dcdee3', 'c7cad3', 'd2d5d9', 'c6c9d3', 'dcdce2', 'dadbe1', 'c4c7d1', 'bdc0cb', 'd3d5da', 'cfd3d8', 'dfe4e7', 'dce1e8', 'e2e4e7', 'e2e5e8', 'e2e5e8', 'e2e5e8']],
    [26, 16, ['cfcfca', 'b69e8f', 'a6b1a8', 'b9cfcd', '9797a8', '9696a6', '8a8b9d', '9494a5', '9091a2', '9393a4', '9192a2', '86889a', 'b2b3c0', '9292a3', '8889a0', '9495a5', '85879b', '84869b', '8e8fa1', '87889b', 'dadfe4', 'd2d7e2', 'e0e2e6', 'e3e6e8', 'e3e6e8', 'e3e6e8']],
    [42, 16, ['dde3e1', 'cdd4c8', 'd8d1c5', 'e2e0de', 'e7e8ed', 'e6e8eb', 'e7e7ed', 'e5e8eb', 'e7e7ed', 'eff0f0', 'e4e6ea', 'e7e8ed', 'e2e5e9', 'e4e6ea', 'dfe4e8', 'e3e6ea', 'dfe4e8', 'e3e6ea', 'e3e3e8', 'e4e6e9', 'e4e8ea', 'ebebed', 'e7e7eb', 'e4e7e9', 'e4e7e9', 'e4e7e9']],
    [58, 5, ['ecebee', 'e3e1e6', 'e4e2e7', 'ebeaed', 'e9e9ec', 'e9e9ec', 'e9e9ec', 'e6e7ea', 'e5e6e9', 'e6e7ea', 'e8e9ec', 'e8e9ec', 'e8e9ec', 'e8e9ec', 'e8e9ec', 'e8e9ec', 'e8e9ec', 'e8e9ec', 'e8e9ec', 'e8e9ec', 'e4e4e8', 'e4e4e8', 'e4e4e8', 'e4e4e8', 'e4e4e8', 'e4e4e8']]
];

const brand = document.getElementById('brand-mosaic');
brandRows.forEach(([y, h, colors]) => {
    colors.forEach((color, i) => addRect(brand, 16 + i * 16, y, 16, h, color));
});
```
